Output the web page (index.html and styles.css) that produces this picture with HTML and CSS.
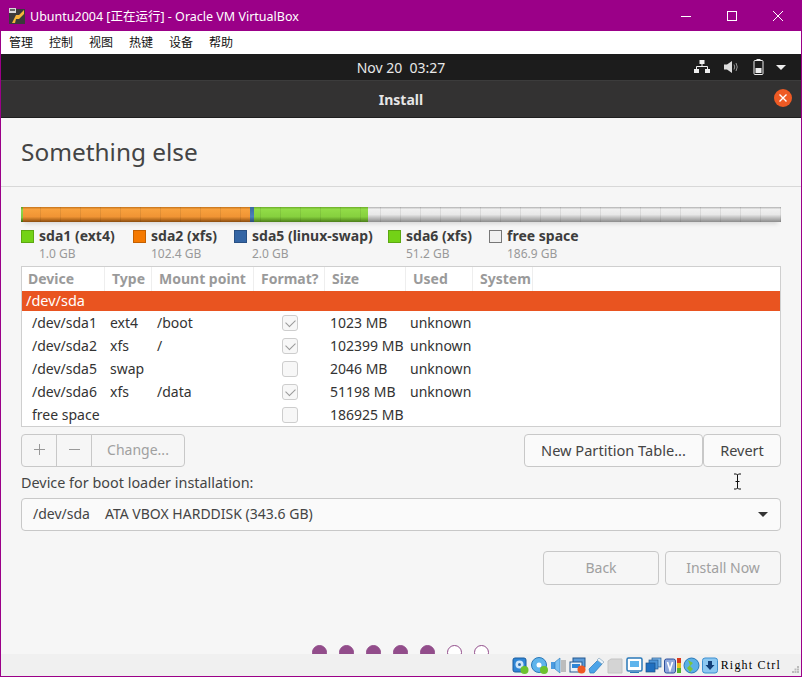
FILE: index.html
```html
<!DOCTYPE html>
<html lang="en">
<head>
    <meta charset="UTF-8">
    <meta name="viewport" content="width=device-width, initial-scale=1.0">
    <title>Ubuntu2004 - Oracle VM VirtualBox</title>
    <link rel="stylesheet" href="styles.css">
</head>
<body>
    <div class="window">
        <div class="titlebar">
            <svg class="app-icon" width="18" height="18" viewBox="0 0 18 18">
                <rect x="1" y="2" width="16" height="15" fill="#3a3a3a"/>
                <path d="M4 16 L8 8 H11 L16 3 V7 L11 12 H8 L7 16 Z" fill="#f5b53a"/>
                <rect x="1" y="1" width="7" height="5" fill="#d8d8d8"/>
                <rect x="2" y="2" width="5" height="2" fill="#666"/>
            </svg>
            <span class="window-title">Ubuntu2004 [正在运行] - Oracle VM VirtualBox</span>
            <div class="window-buttons">
                <svg width="12" height="12" viewBox="0 0 12 12"><path d="M1 6.500H11" stroke="#fff" fill="none"/></svg>
                <svg width="12" height="12" viewBox="0 0 12 12"><rect x="1.500" y="1.500" width="9" height="9" stroke="#fff" fill="none"/></svg>
                <svg width="12" height="12" viewBox="0 0 12 12"><path d="M1 1L11 11M11 1L1 11" stroke="#fff" fill="none"/></svg>
            </div>
        </div>
        <div class="menubar">
            <span>管理</span><span>控制</span><span>视图</span><span>热键</span><span>设备</span><span>帮助</span>
        </div>
        <div class="gnome-bar">
            <span class="clock">Nov 20&nbsp; 03:27</span>
            <div class="tray">
                <svg width="16" height="14" viewBox="0 0 16 14" fill="#eee">
                    <rect x="5.500" y="0" width="5" height="4"/><rect x="0" y="9" width="5" height="4"/><rect x="11" y="9" width="5" height="4"/>
                    <path d="M8 4V7M2.500 9V6.500H13.500V9" stroke="#eee" fill="none"/>
                </svg>
                <svg width="15" height="14" viewBox="0 0 15 14" fill="#ddd">
                    <path d="M0 4.500H3L8 1V13L3 9.500H0Z"/>
                    <path d="M10 4.500Q11.500 7 10 9.500M12 3Q14.500 7 12 11" stroke="#999" fill="none"/>
                </svg>
                <svg width="11" height="16" viewBox="0 0 11 16">
                    <rect x="3.500" y="0" width="4" height="2" fill="#eee"/>
                    <rect x="1" y="1.500" width="9" height="14" rx="1" stroke="#eee" fill="none"/>
                    <rect x="2.500" y="9" width="6" height="5" fill="#eee"/>
                </svg>
                <span class="tray-arrow"></span>
            </div>
        </div>
        <div class="headerbar">
            <span class="header-title">Install</span>
            <span class="close-btn">
                <svg width="8" height="8" viewBox="0 0 8 8"><path d="M0.500 0.500L7.500 7.500M7.500 0.500L0.500 7.500" stroke="#fff" stroke-width="1.400" fill="none"/></svg>
            </span>
        </div>

        <div class="content">
            <h1 class="page-title">Something else</h1>
            <div class="main">
                <div class="part-bar">
                    <div class="seg seg-sda1"></div>
                    <div class="seg seg-sda2"></div>
                    <div class="seg seg-sda5"></div>
                    <div class="seg seg-sda6"></div>
                    <div class="seg seg-free"></div>
                </div>

                <div class="legend">
                    <div class="legend-item legend-sda1">
                        <span class="swatch swatch-green"></span>
                        <div><div class="legend-name">sda1 (ext4)</div><div class="legend-size">1.0 GB</div></div>
                    </div>
                    <div class="legend-item legend-sda2">
                        <span class="swatch swatch-orange"></span>
                        <div><div class="legend-name">sda2 (xfs)</div><div class="legend-size">102.4 GB</div></div>
                    </div>
                    <div class="legend-item legend-sda5">
                        <span class="swatch swatch-blue"></span>
                        <div><div class="legend-name">sda5 (linux-swap)</div><div class="legend-size">2.0 GB</div></div>
                    </div>
                    <div class="legend-item legend-sda6">
                        <span class="swatch swatch-green"></span>
                        <div><div class="legend-name">sda6 (xfs)</div><div class="legend-size">51.2 GB</div></div>
                    </div>
                    <div class="legend-item">
                        <span class="swatch swatch-free"></span>
                        <div><div class="legend-name">free space</div><div class="legend-size">186.9 GB</div></div>
                    </div>
                </div>

                <div class="part-table">
                    <div class="table-head">
                        <span>Device</span><span>Type</span><span>Mount point</span><span>Format?</span><span>Size</span><span>Used</span><span>System</span>
                    </div>
                    <div class="disk-row">/dev/sda</div>
                    <div class="part-row">
                        <span>/dev/sda1</span><span>ext4</span><span>/boot</span><span class="check on"></span><span>1023 MB</span><span>unknown</span>
                    </div>
                    <div class="part-row">
                        <span>/dev/sda2</span><span>xfs</span><span>/</span><span class="check on"></span><span>102399 MB</span><span>unknown</span>
                    </div>
                    <div class="part-row">
                        <span>/dev/sda5</span><span>swap</span><span></span><span class="check"></span><span>2046 MB</span><span>unknown</span>
                    </div>
                    <div class="part-row">
                        <span>/dev/sda6</span><span>xfs</span><span>/data</span><span class="check on"></span><span>51198 MB</span><span>unknown</span>
                    </div>
                    <div class="part-row">
                        <span>free space</span><span></span><span></span><span class="check"></span><span>186925 MB</span><span></span>
                    </div>
                </div>

                <div class="table-actions">
                    <div class="btn-group">
                        <button class="btn btn-icon" disabled>
                            <svg width="13" height="13" viewBox="0 0 13 13"><path d="M6.500 1V12M1 6.500H12" stroke="#999" fill="none"/></svg>
                        </button>
                        <button class="btn btn-icon" disabled>
                            <svg width="13" height="13" viewBox="0 0 13 13"><path d="M1 6.500H12" stroke="#999" fill="none"/></svg>
                        </button>
                        <button class="btn btn-change" disabled>Change...</button>
                    </div>
                    <div class="btn-right">
                        <button class="btn btn-table">New Partition Table...</button>
                        <button class="btn btn-revert">Revert</button>
                    </div>
                </div>

                <div class="boot-label">Device for boot loader installation:</div>
                <div class="combo">
                    <span class="combo-dev">/dev/sda</span>
                    <span>ATA VBOX HARDDISK (343.6 GB)</span>
                    <span class="combo-arrow"></span>
                </div>

                <div class="nav-buttons">
                    <button class="btn btn-nav btn-back" disabled>Back</button>
                    <button class="btn btn-nav btn-install" disabled>Install Now</button>
                </div>
            </div>
            <div class="dots">
                <span class="dot"></span><span class="dot"></span><span class="dot"></span><span class="dot"></span><span class="dot"></span><span class="dot open"></span><span class="dot open"></span>
            </div>
            <svg class="ibeam" width="9" height="17" viewBox="0 0 9 17">
                <path d="M1 1H3.500L4.500 2L5.500 1H8M4.500 2V15M1 16H3.500L4.500 15L5.500 16H8M2.500 8.500H6.500" stroke="#111" fill="none"/>
            </svg>
        </div>

        <div class="statusbar">
            <svg viewBox="0 0 17 17"><rect x="1" y="1" width="13" height="14" rx="2" fill="#2f86d6" stroke="#1b5c9e"/><circle cx="7.500" cy="7.500" r="4" fill="#cfe6fa"/><circle cx="7.500" cy="7.500" r="1.500" fill="#2f6fae"/><circle cx="12.500" cy="13" r="4" fill="#6cc22e"/></svg>
            <svg viewBox="0 0 17 17"><circle cx="8" cy="8" r="7.500" fill="#5fb4ec" stroke="#2a78b8"/><circle cx="8" cy="8" r="2.500" fill="#fff"/><circle cx="13" cy="13" r="4" fill="#6cc22e"/></svg>
            <svg viewBox="0 0 17 17"><rect x="1" y="5" width="4" height="7" fill="#4b9be0"/><path d="M5 5L10 1V16L5 12Z" fill="#7cc0f2" stroke="#2a78b8" stroke-width="0.600"/><rect x="11" y="3" width="5" height="12" fill="#bcbcbc"/></svg>
            <svg viewBox="0 0 17 17"><rect x="4" y="1" width="12" height="9" fill="#5b9bd8" stroke="#25598f"/><rect x="1" y="5" width="12" height="10" fill="#e8f2fb" stroke="#25598f"/><rect x="3" y="7" width="8" height="4" fill="#2f86d6"/><circle cx="12.500" cy="12.500" r="4" fill="#ee5a24"/></svg>
            <svg viewBox="0 0 17 17"><path d="M1 12L10 3L14 7L6 16H2Z" fill="#4ba3e8" stroke="#2a78b8" stroke-width="0.700"/><path d="M11 1L16 5L14 7L9 3Z" fill="#eaf4fb" stroke="#7a9ab5" stroke-width="0.600"/></svg>
            <svg viewBox="0 0 17 17"><path d="M1 4L4 2H15V16H1Z" fill="#d4d4d4" stroke="#c4c4c4"/></svg>
            <svg viewBox="0 0 17 17"><rect x="1" y="1" width="15" height="13" rx="1.500" fill="#fff" stroke="#2a78b8" stroke-width="1.500"/><rect x="4" y="4" width="9" height="6" fill="#5fb4ec"/><path d="M4 15.500H13" stroke="#2a78b8"/></svg>
            <svg viewBox="0 0 17 17"><rect x="7" y="1" width="9" height="9" fill="#7db9ec" stroke="#25598f" stroke-width="0.700"/><rect x="4" y="3" width="9" height="9" fill="#4b94d8" stroke="#25598f" stroke-width="0.700"/><rect x="1" y="6" width="9" height="9" fill="#1f6fc0" stroke="#1b4f85" stroke-width="0.700"/></svg>
            <svg viewBox="0 0 17 17"><rect x="0.500" y="2" width="11" height="14" rx="2" fill="#8fa8dc" stroke="#2d4f9c"/><path d="M3.500 5L6 13L8.500 5" stroke="#fff" stroke-width="1.600" fill="none"/><rect x="13" y="1" width="4" height="5" fill="#d83a1e"/><rect x="13" y="6" width="4" height="5" fill="#e8c020"/><rect x="13" y="11" width="4" height="5" fill="#55b030"/></svg>
            <svg viewBox="0 0 17 17"><circle cx="8.500" cy="8.500" r="7.500" fill="#5ab0e6" stroke="#2a78b8"/><path d="M5 3L10 6L7 9L10 12L7 15L4 11L7 8Z" fill="#7cc43a"/></svg>
            <svg viewBox="0 0 17 17"><rect x="0.500" y="1" width="15" height="15" rx="2.500" fill="#8cc8f2" stroke="#3d8fd0"/><path d="M6 4H10V8H12.500L8 13L3.500 8H6Z" fill="#123f78"/></svg>
            <span class="host-key">Right Ctrl</span>
            <svg class="grip" width="8" height="8" viewBox="0 0 8 8" fill="#bbb"><rect x="5" y="0" width="2" height="2"/><rect x="2.500" y="2.500" width="2" height="2"/><rect x="5" y="2.500" width="2" height="2"/><rect x="0" y="5" width="2" height="2"/><rect x="2.500" y="5" width="2" height="2"/><rect x="5" y="5" width="2" height="2"/></svg>
        </div>
    </div>
</body>
</html>
```

FILE: styles.css
```css
* {
    box-sizing: border-box;
}
html, body {
    margin: 0;
    height: 100%;
}
body {
    font-family: "Noto Sans", sans-serif;
    font-size: 14px;
    color: #3d3d3d;
}
.window {
    position: relative;
    height: 677px;
    display: flex;
    flex-direction: column;
    border: 1px solid #9b0088;
    border-width: 0 1px 1px;
    overflow: hidden;
}

/* host window */
.titlebar {
    height: 31px;
    flex: none;
    background: #9b0088;
    display: flex;
    align-items: center;
    padding-left: 7px;
    color: #fff;
}
.app-icon {
    margin-right: 4px;
}
.window-title {
    font-family: "Noto Sans", "Noto Sans CJK SC", sans-serif;
    font-size: 12.5px;
}
.window-buttons {
    margin-left: auto;
    display: flex;
    gap: 34px;
    padding-right: 17px;
}
.menubar {
    height: 23px;
    flex: none;
    background: #fff;
    display: flex;
    gap: 16px;
    padding: 0 0 2px 8px;
    align-items: center;
    font-family: "Noto Sans CJK SC", sans-serif;
    font-size: 12px;
    color: #111;
}

/* gnome top bar */
.gnome-bar {
    height: 27px;
    flex: none;
    background: #1c1c1c;
    position: relative;
    display: flex;
    align-items: center;
    justify-content: center;
    color: #e8e8e8;
    font-size: 14px;
    border-bottom: 1px solid #3c3c3c;
}
.tray {
    position: absolute;
    right: 15px;
    top: 5px;
    display: flex;
    align-items: center;
    gap: 14px;
}
.tray-arrow {
    border: 5px solid transparent;
    border-top: 5px solid #eee;
    border-bottom: 0;
    margin-left: -2px;
}
.headerbar {
    height: 37px;
    flex: none;
    background: #333232;
    border-bottom: 1px solid #1f1f1f;
    position: relative;
    display: flex;
    align-items: center;
    justify-content: center;
}
.header-title {
    color: #e6e6e6;
    font-weight: 700;
    font-size: 14px;
}
.close-btn {
    position: absolute;
    right: 9px;
    top: 8px;
    width: 18px;
    height: 18px;
    border-radius: 50%;
    background: #ee5a24;
    display: flex;
    align-items: center;
    justify-content: center;
}

/* installer page */
.content {
    position: relative;
    flex: 1;
    min-height: 0;
    background: #f6f6f6;
    overflow: hidden;
}
.page-title {
    margin: 0;
    height: 69px;
    padding: 16px 0 0 20px;
    font-size: 24.4px;
    font-weight: 400;
    line-height: 36px;
    color: #444;
    border-bottom: 1px solid #d8d8d8;
}
.main {
    padding: 20px 20px 0;
}
.part-bar {
    height: 15px;
    display: flex;
    position: relative;
    box-shadow: 0 5px 4px -3px rgba(0, 0, 0, 0.12);
}
.part-bar::after {
    content: "";
    position: absolute;
    inset: 0;
    background: repeating-linear-gradient(90deg, transparent 0, transparent 19px, rgba(0, 0, 0, 0.08) 19px, rgba(0, 0, 0, 0.08) 20px);
}
.seg {
    height: 100%;
}
.seg-sda1 {
    width: 2px;
    background: linear-gradient(#5f9a1c, #8fd84a 20%, #7fc63c 70%, #3c6210);
}
.seg-sda2 {
    width: 227px;
    background: linear-gradient(#c4731a, #f8a13e 15%, #f09434 65%, #8a4c0e);
}
.seg-sda5 {
    width: 4px;
    background: linear-gradient(#3b6aa0, #4d80bb 65%, #2a4a74);
}
.seg-sda6 {
    width: 114px;
    background: linear-gradient(#6cac28, #92dc48 15%, #86d03e 65%, #4c7e1a);
}
.seg-free {
    flex: 1;
    background: linear-gradient(#b0b0b0, #f0f0f0 15%, #e8e8e8 50%, #8c8c8c);
}
.legend {
    display: flex;
    margin-top: 5px;
    height: 36px;
}
.legend-item {
    display: flex;
    gap: 5px;
    line-height: 18px;
}
.legend-sda1 { width: 112px; }
.legend-sda2 { width: 101px; }
.legend-sda5 { width: 154px; }
.legend-sda6 { width: 101px; }
.legend-name {
    font-weight: 700;
    color: #3d3d3d;
}
.legend-size {
    font-size: 12px;
    color: #999;
}
.swatch {
    width: 13px;
    height: 13px;
    margin-top: 3px;
    border: 1px solid rgba(0, 0, 0, 0.2);
}
.swatch-green { background: #73d216; }
.swatch-orange { background: #f57900; }
.swatch-blue { background: #3465a4; }
.swatch-free { background: #f0f0f0; border-color: #777; }

.part-table {
    margin-top: 3px;
    height: 161px;
    background: #fff;
    border: 1px solid #cfcfcf;
}
.table-head {
    height: 24px;
    display: grid;
    grid-template-columns: 83px 47px 102px 71px 81px 67px 60px;
    font-weight: 700;
    color: #9a9a9a;
    line-height: 24px;
}
.table-head span {
    padding-left: 7px;
    border-right: 1px solid #eee;
    white-space: nowrap;
}
.table-head span:first-child {
    padding-left: 6px;
}
.disk-row {
    height: 20px;
    line-height: 19px;
    font-size: 14.5px;
    background: #e95420;
    color: #fff;
    padding-left: 4px;
}
.part-row {
    height: 23px;
    display: grid;
    grid-template-columns: 78px 47px 125px 48px 80px 80px;
    align-items: center;
    padding-left: 10px;
    color: #333;
}
.part-row span {
    white-space: nowrap;
}
.check {
    width: 16px;
    height: 16px;
    border: 1px solid #cdcdcd;
    border-radius: 3px;
    background: #f7f7f7;
    position: relative;
}
.check.on::after {
    content: "";
    position: absolute;
    left: 3px;
    top: 1px;
    width: 8px;
    height: 5px;
    margin-top: 2px;
    border-left: 1.5px solid #999;
    border-bottom: 1.5px solid #999;
    transform: rotate(-45deg);
}
.table-actions {
    margin-top: 7px;
    display: flex;
    justify-content: space-between;
}
.btn {
    font-family: inherit;
    font-size: 14px;
    height: 33px;
    padding: 0 0 2px;
    background: #fafafa;
    border: 1px solid #c8c8c8;
    border-radius: 4px;
    color: #444;
}
.btn:disabled {
    color: #a0a0a0;
    background: #f6f6f6;
}
.btn-group {
    display: flex;
}
.btn-group .btn {
    border-radius: 0;
    margin-right: -1px;
}
.btn-group .btn:first-child {
    border-radius: 4px 0 0 4px;
}
.btn-group .btn:last-child {
    border-radius: 0 4px 4px 0;
}
.btn-icon {
    width: 36px;
    display: flex;
    align-items: center;
    justify-content: center;
}
.btn-change {
    width: 94px;
}
.btn-right {
    display: flex;
}
.btn-table {
    width: 179px;
    font-size: 14.6px;
}
.btn-revert {
    width: 78px;
    font-size: 14.5px;
}
.boot-label {
    margin-top: 6px;
    height: 25px;
    line-height: 20px;
    font-size: 14.4px;
    color: #444;
}
.combo {
    height: 33px;
    background: #fafafa;
    border: 1px solid #c8c8c8;
    border-radius: 4px;
    display: flex;
    align-items: center;
    padding: 0 12px 2px 11px;
    color: #444;
}
.combo-dev {
    width: 72px;
}
.combo-arrow {
    margin-left: auto;
    border: 5px solid transparent;
    border-top: 5px solid #333;
    border-bottom: 0;
    margin-top: 2px;
}
.nav-buttons {
    margin-top: 20px;
    display: flex;
    justify-content: flex-end;
    gap: 6px;
}
.btn-nav {
    height: 34px;
}
.btn-back {
    width: 116px;
}
.btn-install {
    width: 116px;
}

/* step dots, cut off by the status bar */
.dots {
    position: absolute;
    left: 311px;
    top: 527px;
    display: flex;
    gap: 12px;
}
.dot {
    width: 15px;
    height: 15px;
    border-radius: 50%;
    background: #924d8b;
    border: 1px solid #924d8b;
}
.dot.open {
    background: #fff;
}
.ibeam {
    position: absolute;
    left: 732px;
    top: 355px;
}

/* virtualbox status bar */
.statusbar {
    height: 22px;
    flex: none;
    background: #f0f0f0;
    display: flex;
    align-items: center;
    justify-content: flex-end;
    gap: 2px;
    padding-right: 1px;
}
.statusbar svg {
    width: 17px;
    height: 17px;
}
.host-key {
    font-family: "Liberation Serif", serif;
    font-size: 12px;
    letter-spacing: 1.2px;
    color: #000;
    margin-right: 9px;
}
.statusbar .grip {
    width: 8px;
    height: 8px;
    align-self: flex-end;
    margin-bottom: 2px;
}
```
